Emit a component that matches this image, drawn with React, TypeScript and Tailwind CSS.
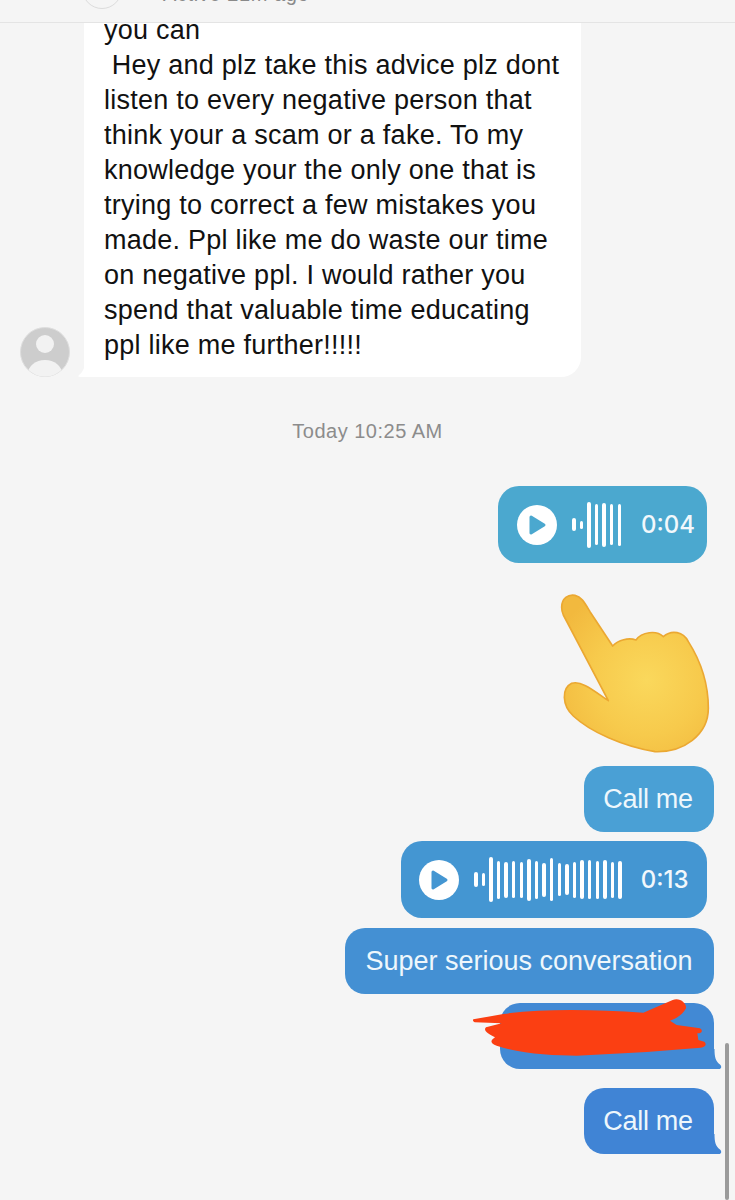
import React from 'react';

const LINES = [
  'you can',
  ' Hey and plz take this advice plz dont',
  'listen to every negative person that',
  'think your a scam or a fake. To my',
  'knowledge your the only one that is',
  'trying to correct a few mistakes you',
  'made. Ppl like me do waste our time',
  'on negative ppl. I would rather you',
  'spend that valuable time educating',
  'ppl like me further!!!!!',
];

const WAVE_SHORT = [13, 8, 46, 41, 44, 41, 42];
const WAVE_LONG = [15, 13, 45, 38, 36, 37, 36, 42, 38, 34, 43, 33, 31, 36, 39, 39, 38, 39, 36, 38];

const Tail: React.FC<{ color: string }> = ({ color }) => (
  <svg className="absolute right-[-7.500px] bottom-0" width="8" height="20" viewBox="0 0 8 20">
    <path d="M0.500 0 C0.500 8 1.500 12 6 15.500 C8 17.500 7.500 20 5 20 L0 20 L0 0 Z" fill={color} />
  </svg>
);

const VoiceBubble: React.FC<{ bars: number[]; time: string; bg: string; color: string; mt: string; width: string; pl: string; timeMl: string }> = ({ bars, time, bg, color, mt, width, pl, timeMl }) => (
  <div className={`mr-[28px] h-[77px] rounded-[21px] flex items-center ${width} ${pl} ${bg} ${mt}`}>
    <div className="w-[40px] h-[40px] rounded-full bg-white flex items-center justify-center shrink-0">
      <svg width="20" height="22" viewBox="0 0 20 22">
        <path d="M4 3 L17 11 L4 19 Z" fill={color} stroke={color} strokeWidth="3" strokeLinejoin="round" />
      </svg>
    </div>
    <div className="flex items-center gap-[4.100px] ml-[15px]">
      {bars.map((h, i) => (
        <div key={i} className="w-[3.500px] rounded-full bg-white" style={{ height: h }} />
      ))}
    </div>
    <span className={`text-[24px] font-medium text-[#f2f8fc] leading-none font-['Inter',sans-serif] ${timeMl}`}>{time}</span>
  </div>
);

const PointingHand = () => (
  <svg className="mt-[17px] mr-[5px] block" width="190" height="180" viewBox="0 0 570 540">
    <defs>
      <radialGradient id="handFill" gradientUnits="userSpaceOnUse" cx="320" cy="300" r="300">
        <stop offset="0%" stopColor="#fad85c" />
        <stop offset="55%" stopColor="#f7ca4c" />
        <stop offset="100%" stopColor="#f2b93e" />
      </radialGradient>
    </defs>
    <path
      d="M65 82 C65 55 85 42 105 46 C125 50 135 70 150 95 L218 198 C235 180 265 172 288 180 C305 155 350 150 370 170 C395 148 430 155 445 185 C480 240 505 310 505 385 C505 465 430 518 345 515 C250 500 150 455 100 408 C65 375 65 325 95 310 C125 300 165 335 205 362 L70 105 C66 96 65 90 65 82 Z"
      fill="url(#handFill)"
      stroke="#eba832"
      strokeWidth="5"
      strokeLinejoin="round"
    />
  </svg>
);

const App: React.FC = () => {
  return (
    <div className="relative w-[735px] h-[1200px] overflow-hidden bg-[#f5f5f5] font-['Liberation_Sans',Arial,sans-serif]">
      {/* Header, cut off by the top of the shot */}
      <div className="h-[23px] overflow-hidden border-b border-[#e4e4e4] bg-[#f5f5f5] flex items-end pl-[82px]">
        <div className="w-[40px] h-[40px] mb-[13px] rounded-full border border-[#dcdcdc] shrink-0" />
        <span className="ml-[41px] mb-[16px] text-[20px] leading-[24px] tracking-[0.6px] text-[#8a8a8a]">Active 21m ago</span>
      </div>

      {/* Incoming message */}
      <div className="flex items-end pl-[20px] gap-[14px]">
        <svg width="50" height="50" viewBox="0 0 50 50" className="shrink-0">
          <defs>
            <clipPath id="avatarClip">
              <circle cx="25" cy="25" r="24.500" />
            </clipPath>
          </defs>
          <circle cx="25" cy="25" r="24.500" fill="#cdcdcd" stroke="#dedede" />
          <circle cx="25" cy="17" r="9" fill="#f2f2f2" />
          <ellipse cx="25" cy="47" rx="17" ry="14" fill="#f2f2f2" clipPath="url(#avatarClip)" />
        </svg>
        <div className="relative w-[497px] bg-white rounded-br-[20px] pl-[20px] pb-[15px]">
          <svg className="absolute left-[-6px] bottom-0" width="8" height="16" viewBox="0 0 8 16">
            <path d="M7 0 C7 6 5 11 1 14 C0 15 0 16 2 16 L8 16 L8 0 Z" fill="#ffffff" />
          </svg>
          <div className="relative h-[339px] overflow-hidden">
            <div className="mt-[-10px]">
              {LINES.map((line, i) => (
                <div key={i} className="h-[35px] leading-[35px] text-[27px] tracking-[0.25px] text-[#111111] whitespace-pre">
                  {line}
                </div>
              ))}
            </div>
          </div>
        </div>
      </div>

      <div className="mt-[42px] h-[24px] leading-[24px] text-center text-[20px] tracking-[0.5px] text-[#8c8c8c]">Today 10:25 AM</div>

      {/* Outgoing messages */}
      <div className="mt-[43px] flex flex-col items-end">
        <VoiceBubble bars={WAVE_SHORT} time="0:04" bg="bg-[#4ba8cf]" color="#4ba8cf" mt="" width="w-[209px]" pl="pl-[19px]" timeMl="ml-[20px]" />
        <PointingHand />
        <div className="mt-[6px] mr-[21px] h-[66px] w-[130px] pt-[1px] pr-[2px] rounded-[20px] bg-[#4aa0d5] flex items-center justify-center text-[27px] tracking-[-0.3px] text-[#eef7fc]">
          Call me
        </div>
        <VoiceBubble bars={WAVE_LONG} time="0:13" bg="bg-[#4496d2]" color="#4496d2" mt="mt-[9px]" width="w-[306px]" pl="pl-[18px]" timeMl="ml-[19px]" />
        <div className="mt-[10px] mr-[21px] h-[66px] w-[369px] pt-[1px] pr-[1px] rounded-[20px] bg-[#4490d3] flex items-center justify-center text-[27px] text-[#eef7fc]">
          Super serious conversation
        </div>
        <div className="relative mt-[9px] mr-[21px] h-[66px] w-[214px] rounded-[20px] rounded-br-none bg-[#4289d4]">
          <Tail color="#4289d4" />
          <svg className="absolute left-[-40px] top-[-13px]" width="275" height="190" viewBox="0 0 825 570">
            <path
              d="M40 88 L130 72 C250 55 400 58 550 68 L638 30 C660 22 680 40 678 55 C670 72 650 85 630 92 L650 105 L720 115 C730 122 726 130 712 130 L715 150 L733 155 C742 163 735 172 722 173 L560 186 L350 197 C280 197 180 192 110 167 C90 160 90 152 105 142 C85 132 68 122 78 112 L125 100 L45 97 C38 95 38 90 40 88 Z"
              fill="#fb3f12"
            />
          </svg>
        </div>
        <div className="relative mt-[19px] mr-[21px] h-[66px] w-[130px] pt-[1px] pr-[2px] rounded-[20px] rounded-br-none bg-[#4084d5] flex items-center justify-center text-[27px] tracking-[-0.3px] text-[#eef7fc]">
          Call me
          <Tail color="#4084d5" />
        </div>
      </div>

      {/* Scrollbar */}
      <div className="absolute left-[725px] top-[1043px] w-[4px] h-[157px] rounded-full bg-[#9b9b9b]" />
    </div>
  );
};

export default App;
